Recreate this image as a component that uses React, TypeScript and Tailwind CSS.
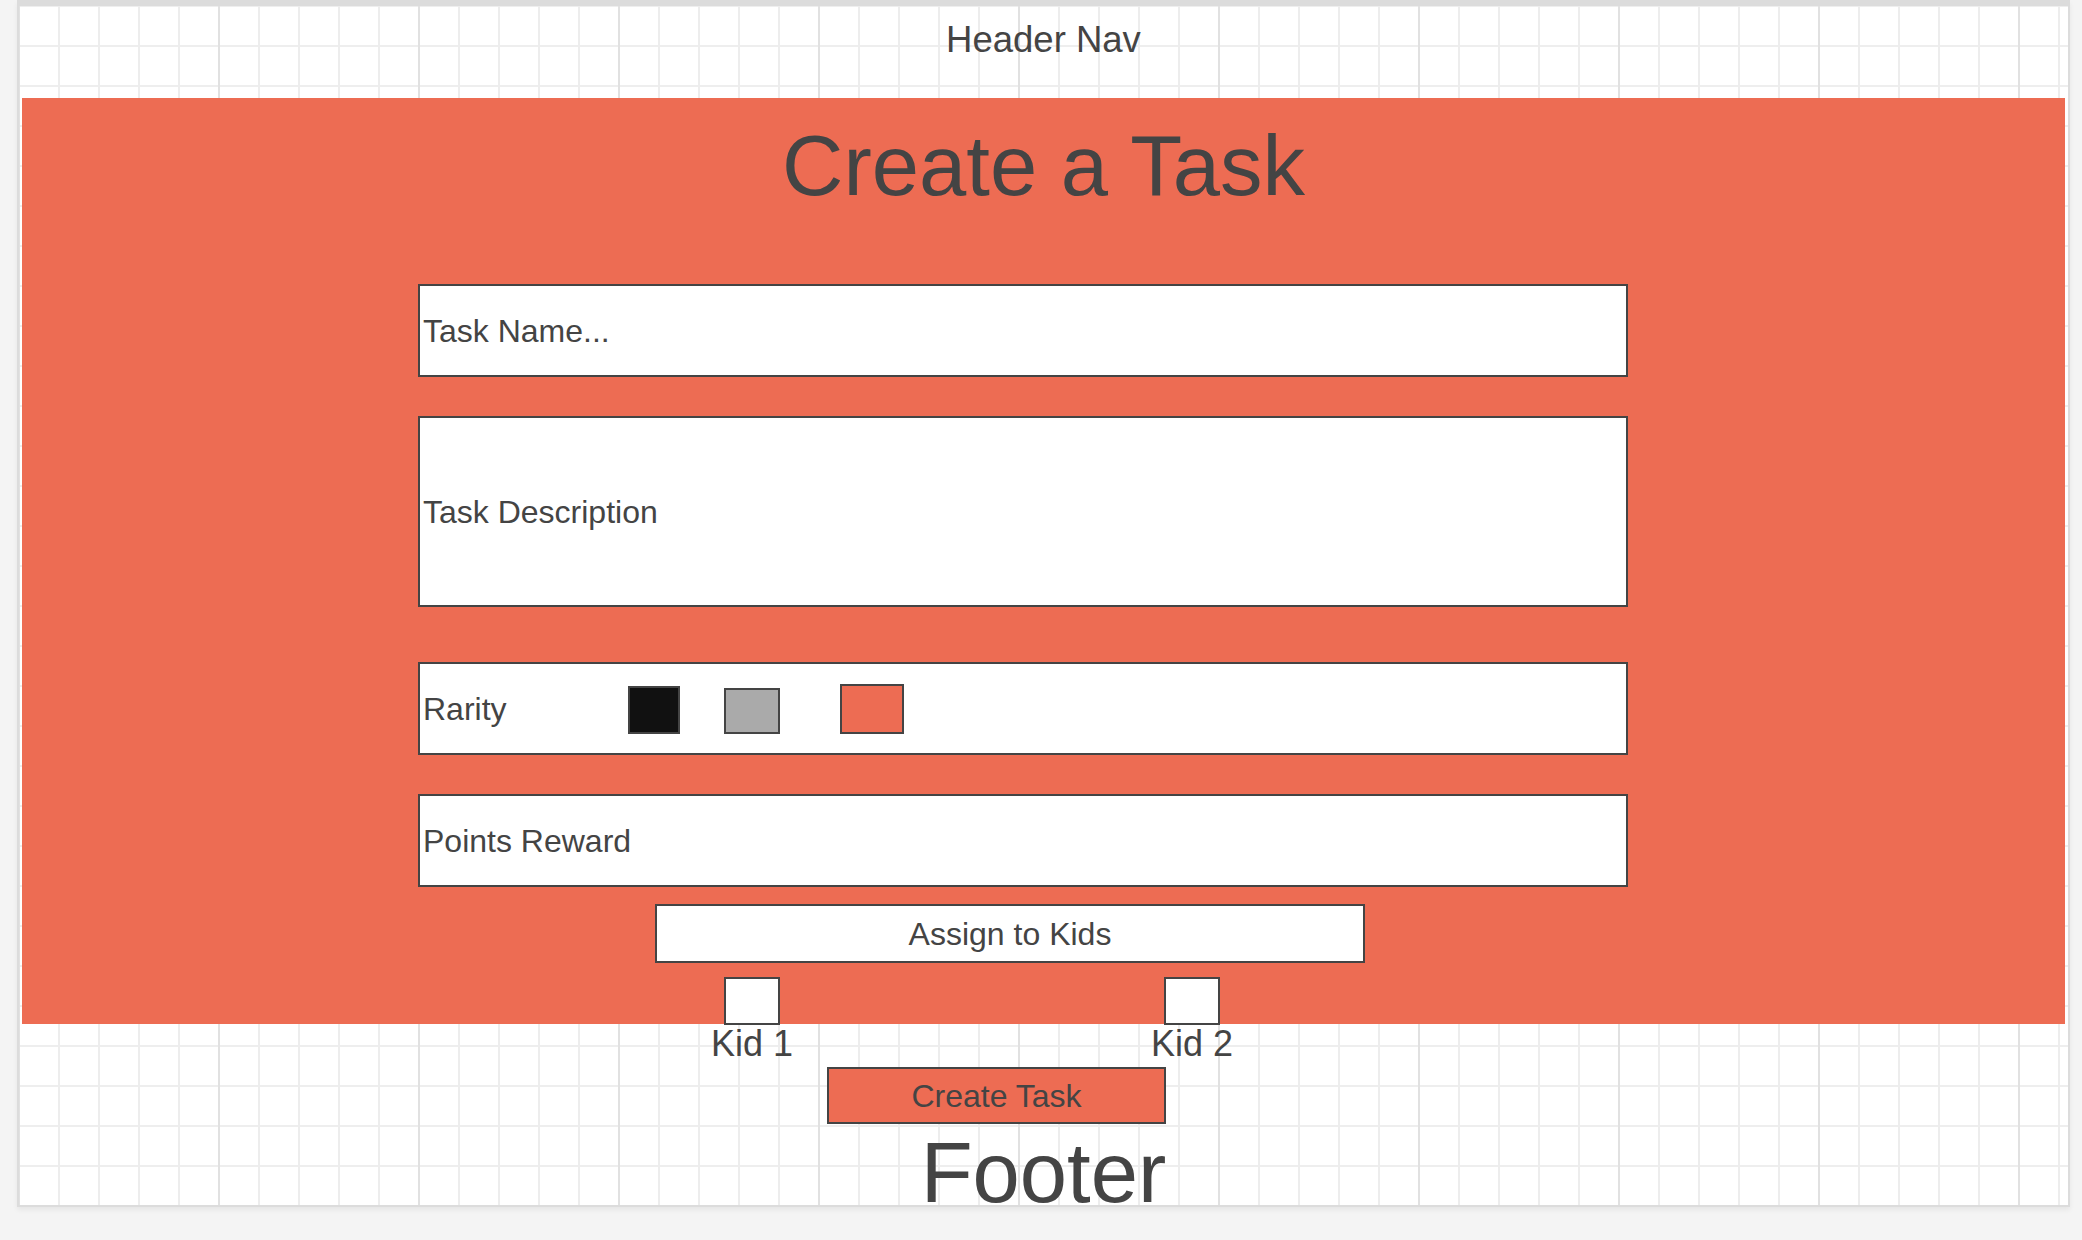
const fieldBox =
  'border-2 border-[#444] bg-white flex items-center pl-[3px] text-[32px] leading-none'

const rarityColors: { key: string; className: string }[] = [
  { key: 'common', className: 'w-[52px] h-[48px] bg-[#111]' },
  { key: 'rare', className: 'ml-[44px] w-[56px] h-[46px] bg-[#aaaaaa]' },
  { key: 'epic', className: 'ml-[60px] w-[64px] h-[50px] bg-[#ed6c53]' },
]

export default function App() {
  return (
    <div className="min-h-screen bg-[#f4f4f4] font-['Liberation_Sans',Arial,sans-serif] text-[#444]">
      {/* wireframe canvas */}
      <div className="ml-[17px] w-[2053px] h-[1207px] border-t-[6px] border-x-2 border-b-2 border-[#dcdcdc] shadow-[0_3px_5px_rgba(0,0,0,0.06)]">
        <div className="h-full bg-white bg-[image:linear-gradient(to_right,#e1e1e1_2px,transparent_2px),linear-gradient(to_right,#ededed_2px,transparent_2px),linear-gradient(to_bottom,#eeeeee_2px,transparent_2px)] [background-size:200px_100%,40px_40px,40px_40px] [background-position:-1px_0,-1px_-1px,-1px_-1px]">
          {/* header */}
          <div className="h-[92px] pt-[16px] text-center text-[36.5px] leading-none">Header Nav</div>

          {/* form section */}
          <div className="mx-[3px] h-[926px] bg-[#ed6c53]">
            <h1 className="pt-[25px] text-center text-[85px] leading-none">Create a Task</h1>

            <div className="ml-[396px] mt-[76px] w-[1210px]">
              <div className={`${fieldBox} h-[93px]`}>Task Name...</div>
              <div className={`${fieldBox} mt-[39px] h-[191px]`}>Task Description</div>
              <div className={`${fieldBox} mt-[55px] h-[93px]`}>
                <span className="w-[205px]">Rarity</span>
                <div className="flex items-end mt-[1px]">
                  {rarityColors.map((c) => (
                    <button
                      key={c.key}
                      type="button"
                      className={`border-2 border-[#444] ${c.className}`}
                    />
                  ))}
                </div>
              </div>
              <div className={`${fieldBox} mt-[39px] h-[93px]`}>Points Reward</div>
            </div>

            <button
              type="button"
              className="block ml-[633px] mt-[17px] w-[710px] h-[59px] border-2 border-[#444] bg-white text-[32px] leading-none text-[#444]"
            >
              Assign to Kids
            </button>

            <div className="flex ml-[702px] mt-[14px]">
              <div className="w-[56px] h-[48px] border-2 border-[#444] bg-white" />
              <div className="ml-[384px] w-[56px] h-[48px] border-2 border-[#444] bg-white" />
            </div>
          </div>

          {/* kid labels */}
          <div className="flex ml-[705px] mt-[2px] text-[36px] leading-none">
            <div className="w-[56px] flex justify-center whitespace-nowrap">Kid 1</div>
            <div className="ml-[384px] w-[56px] flex justify-center whitespace-nowrap">Kid 2</div>
          </div>

          <button
            type="button"
            className="block ml-[808px] mt-[5px] w-[339px] h-[57px] border-2 border-[#444] bg-[#ed6c53] text-[32px] leading-none text-[#444]"
          >
            Create Task
          </button>

          <div className="mt-[6px] text-center text-[85px] leading-none">Footer</div>
        </div>
      </div>
    </div>
  )
}
